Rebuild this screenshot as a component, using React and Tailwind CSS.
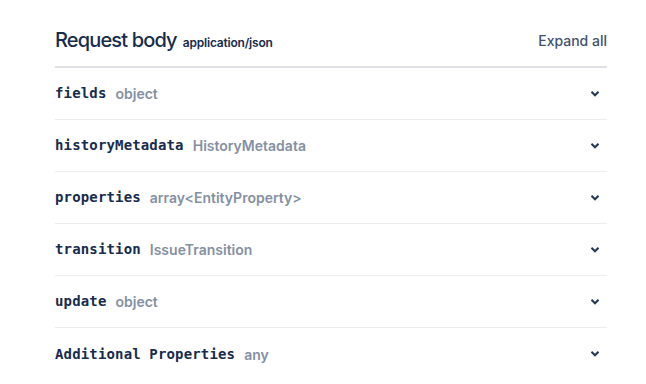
const ROWS = [
  { name: 'fields', type: 'object' },
  { name: 'historyMetadata', type: 'HistoryMetadata' },
  { name: 'properties', type: 'array<EntityProperty>' },
  { name: 'transition', type: 'IssueTransition' },
  { name: 'update', type: 'object' },
  { name: 'Additional Properties', type: 'any' },
]

function Chevron() {
  return (
    <svg viewBox="0 0 8 6" className="w-[8px] h-[6px]" fill="none" stroke="#253858" strokeWidth={2.2} strokeLinecap="square">
      <path d="M1.2 1.5L4 4.2L6.8 1.5" />
    </svg>
  )
}

export default function App() {
  return (
    <div className="w-[646px] h-[384px] overflow-hidden bg-white pl-[55px] pr-[39px] pt-[27px]" style={{ fontFamily: 'Inter, "Liberation Sans", sans-serif' }}>
      <div className="flex items-center justify-between h-[26px] mb-[13px]">
        <div className="flex items-baseline gap-[6px]">
          <h2 className="text-[20px] font-medium text-[#172B4D] tracking-[-0.85px]">Request body</h2>
          <span className="text-[12px] font-semibold text-[#172B4D] tracking-[-0.2px]">application/json</span>
        </div>
        <button className="text-[14px] font-medium text-[#42526E]">Expand all</button>
      </div>
      <div className="border-t-2 border-[#DFE1E6]">
        {ROWS.map((row, i) => (
          <div key={row.name} className={`flex items-center justify-between h-[52px] pr-[8px] ${i < ROWS.length - 1 ? 'border-b border-[#EBECF0]' : ''}`}>
            <div className="flex items-center gap-[9px] text-[14px]">
              <span className="font-bold text-[#172B4D] tracking-[0.15px]" style={{ fontFamily: '"DejaVu Sans Mono", "Liberation Mono", monospace' }}>{row.name}</span>
              <span className="font-semibold text-[#8590A2]">{row.type}</span>
            </div>
            <Chevron />
          </div>
        ))}
      </div>
    </div>
  )
}
